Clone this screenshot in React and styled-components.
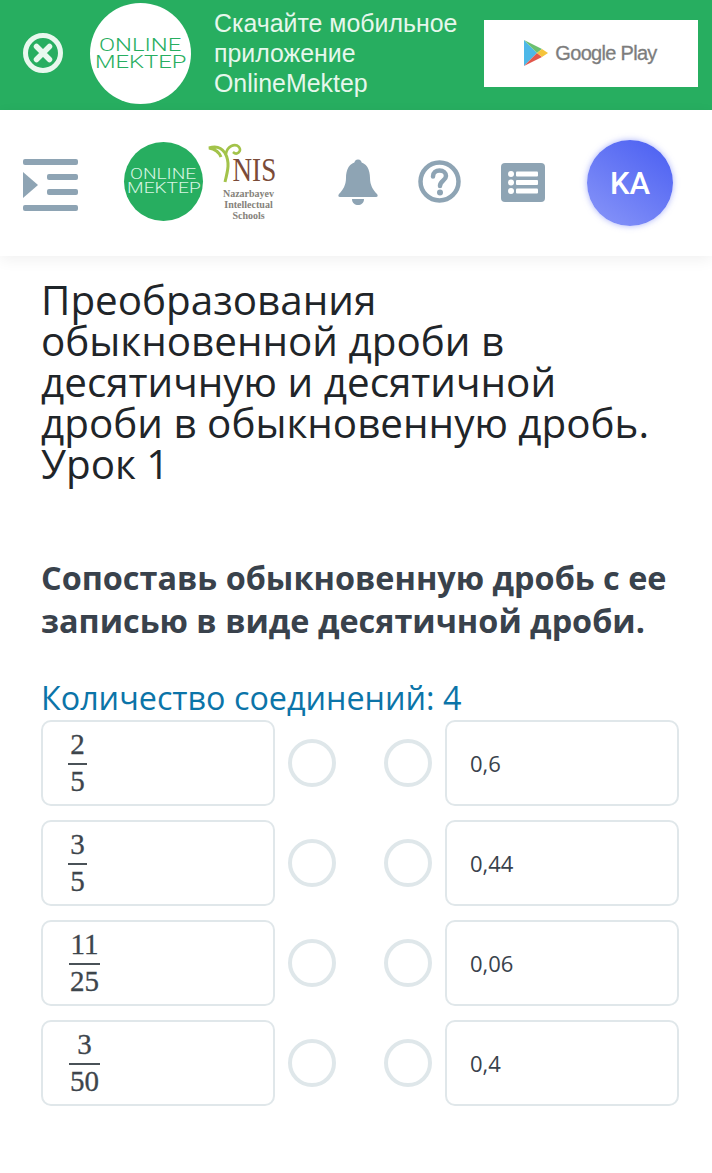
import React from "react";
import styled, { createGlobalStyle } from "styled-components";

const Global = createGlobalStyle`
  html, body { margin: 0; padding: 0; background: #fff; }
  body { font-family: "Open Sans", "Noto Sans", sans-serif; }
  * { box-sizing: border-box; }
`;
const Page = styled.div`width: 712px; height: 1173px; overflow: hidden; background: #fff;`;
const Banner = styled.div`
  height: 110px; background: #27ae60; display: flex; align-items: center; padding-left: 23px;
`;
const CloseIcon = styled.svg`width: 40px; height: 40px; flex: none; margin-top: -5px;`;
const LogoCircle = styled.div`
  flex: none; border-radius: 50%;
  width: ${p => p.$size}px; height: ${p => p.$size}px;
  margin-left: ${p => p.$left}px;
  margin-top: ${p => p.$top}px;
  background: ${p => p.$bg};
  color: ${p => p.$fg};
  display: flex; flex-direction: column; align-items: center; justify-content: center;
  font-family: "Roboto", sans-serif; font-weight: 300;
  font-size: ${p => p.$fs}px; line-height: ${p => p.$fs - 1}px;
`;
const LogoWord = styled.span`display: block; transform: scaleX(1.32);`;
const BannerText = styled.div`
  margin-left: 23px; width: 270px; color: #e6f7ec; font-family: "Liberation Sans", sans-serif;
  font-size: 24.9px; line-height: 30px; margin-top: -5px; flex: none;
`;
const PlayBox = styled.div`
  flex: none; width: 214px; height: 67px; background: #fff; display: flex; align-items: center; justify-content: center;
  gap: 6px; margin-top: -4px; padding-right: 2px;
  color: #7d7d7d; font-family: "Liberation Sans", sans-serif; font-size: 20px; letter-spacing: -0.7px;
  -webkit-text-stroke: 0.3px #7d7d7d;
`;
const Header = styled.header`
  height: 146px; background: #fff; display: flex; align-items: center; padding-left: 23px;
  box-shadow: 0 4px 14px rgba(0, 0, 0, 0.06);
  position: relative;
`;
const HeaderIcon = styled.svg`
  flex: none; width: ${p => p.$w}px; height: ${p => p.$h}px; margin-left: ${p => p.$left || 0}px;
  margin-top: ${p => p.$top || 0}px;
`;
const Nis = styled.div`
  flex: none; width: 68px; margin-left: 5px; padding-left: 13px; display: flex; flex-direction: column; align-items: center;
  font-family: "Liberation Serif", serif; color: #85827a; position: relative;
`;
const NisTop = styled.div`height: 43px; width: 100%;`;
const NisName = styled.span`
  position: absolute; right: 0; top: 9px; font-size: 33px; line-height: 33px; color: #7b4b38; transform: scaleX(.82); transform-origin: right;
`;
const NisSprout = styled.svg`position: absolute; left: 0; top: -5px; width: 36px; height: 46px;`;
const NisLine = styled.span`font-size: 10px; line-height: 11px; font-weight: 700; white-space: nowrap;`;
const Avatar = styled.div`
  flex: none; width: 86px; height: 86px; margin-left: 42px; margin-top: 0; border-radius: 50%;
  background: linear-gradient(215deg, #4f63f2 10%, #8391f8 90%);
  box-shadow: 0 0 6px rgba(100, 115, 245, .55);
  color: #fff; display: flex; align-items: center; justify-content: center;
  font-family: "Roboto", sans-serif; font-weight: 500; font-size: 31px;
`;
const Main = styled.main`padding: 23px 33px 0 41px;`;
const Title = styled.h1`
  margin: 0; font-weight: 400; font-size: 40.4px; line-height: 41px; color: #1f2529; width: 625px;
`;
const Question = styled.h2`
  margin: 72px 0 0; font-weight: 700; font-size: 32.4px; line-height: 43px; color: #39424c; width: 640px;
`;
const Count = styled.div`
  margin-top: 33px; font-size: 32.3px; line-height: 44px; color: #0b74a8; white-space: nowrap;
`;
const Rows = styled.div`display: flex; flex-direction: column; gap: 14px; margin-top: 1px;`;
const Row = styled.div`display: grid; grid-template-columns: 234px 1fr 234px; height: 86px; align-items: center;`;
const Cell = styled.div`
  height: 86px; border: 2px solid #e0e7ea; border-radius: 10px; background: #fff;
  display: flex; align-items: center; padding-left: ${p => p.$pad}px;
  color: #39424c; font-size: 22px;
`;
const Ports = styled.div`display: flex; justify-content: center; gap: 48px;`;
const Port = styled.div`width: 48px; height: 48px; border-radius: 50%; border: 4px solid #dfe7ea; background: #fff;`;
const Frac = styled.div`
  display: inline-flex; flex-direction: column; align-items: center; margin-top: -2px;
  font-family: "Liberation Serif", "DejaVu Serif", serif; font-size: 29px; color: #3d454c; line-height: 36px;
  -webkit-text-stroke: 0.3px #3d454c;
`;
const Num = styled.span`display: block; padding: 0 1px 1px; `;
const Den = styled.span`display: block; line-height: 33px; padding: 0 1px; border-top: 2px solid #4a5258; min-width: 19px; text-align: center;`;

const rows = [
  ["2", "5", "0,6"],
  ["3", "5", "0,44"],
  ["11", "25", "0,06"],
  ["3", "50", "0,4"],
];
const G = "#8ea4b4";

export default function App() {
  return (
    <Page>
      <Global />
      <Banner>
        <CloseIcon viewBox="0 0 40 40">
          <circle cx="20" cy="20" r="17.5" fill="none" stroke="#e8f8ee" strokeWidth="5" />
          <path d="M13.5 13.5 L26.5 26.5 M26.5 13.5 L13.5 26.5" stroke="#e8f8ee" strokeWidth="5.5" strokeLinecap="round" />
        </CloseIcon>
        <LogoCircle $size={101} $left={27} $top={-4} $bg="#fff" $fg="#27ae60" $fs={18}>
          <LogoWord>ONLINE</LogoWord>
          <LogoWord>MEKTEP</LogoWord>
        </LogoCircle>
        <BannerText>Скачайте мобильное приложение OnlineMektep</BannerText>
        <PlayBox>
          <svg width="26" height="28" viewBox="0 0 26 28">
            <path d="M1 1 L14 14 L1 27 Z" fill="#4db8e8" />
            <path d="M1 1 L19 10 L14 14 Z" fill="#6cc070" />
            <path d="M1 27 L19 18 L14 14 Z" fill="#e2574c" />
            <path d="M19 10 L25 14 L19 18 L14 14 Z" fill="#f5c33b" />
          </svg>
          <span>Google Play</span>
        </PlayBox>
      </Banner>
      <Header>
        <HeaderIcon $w={55} $h={52} viewBox="0 0 55 52" $top={4} fill={G}>
          <rect x="0" y="0" width="55" height="6" rx="2" />
          <rect x="24" y="15" width="31" height="6" rx="2" />
          <rect x="24" y="30" width="31" height="6" rx="2" />
          <rect x="0" y="46" width="55" height="6" rx="2" />
          <path d="M0 13 L15 26 L0 39 Z" />
        </HeaderIcon>
        <LogoCircle $size={79} $left={46} $top={-3} $bg="#27ae60" $fg="#d6f5e2" $fs={14.5}>
          <LogoWord>ONLINE</LogoWord>
          <LogoWord>MEKTEP</LogoWord>
        </LogoCircle>
        <Nis>
          <NisTop />
          <NisSprout viewBox="0 0 36 46">
            <path d="M17 42 C20 30 22 22 17 13 C13 7 7 6 1 8 C7 9 11 12 13 17" fill="none" stroke="#a3c34a" strokeWidth="3" />
            <path d="M18 14 C19 6 27 3 31 7 C34 11 29 16 25 12" fill="none" stroke="#a3c34a" strokeWidth="2.5" />
          </NisSprout>
          <NisName>NIS</NisName>
          <NisLine>Nazarbayev</NisLine>
          <NisLine>Intellectual</NisLine>
          <NisLine>Schools</NisLine>
        </Nis>
        <HeaderIcon $w={40} $h={46} $left={62} $top={-3} viewBox="0 0 40 46" fill={G}>
          <circle cx="20" cy="4" r="3.5" />
          <path d="M20 3 C29 3 32 11 32 19 C32 26 35 31 39 35 C40 36 40 38 38 38 L2 38 C0 38 0 36 1 35 C5 31 8 26 8 19 C8 11 11 3 20 3 Z" />
          <path d="M14 40 L26 40 C26 44 23 46 20 46 C17 46 14 44 14 40 Z" />
        </HeaderIcon>
        <HeaderIcon $w={43} $h={43} $left={40} $top={-3} viewBox="0 0 43 43">
          <circle cx="21.5" cy="21.5" r="19" fill="none" stroke={G} strokeWidth="4.5" />
          <path d="M15 16.5 C15 12.5 18 10.5 21.5 10.5 C25.5 10.5 28 13 28 16 C28 20.5 22 20.5 22 26" fill="none" stroke={G} strokeWidth="4.5" strokeLinecap="round" />
          <circle cx="22" cy="32.5" r="3" fill={G} />
        </HeaderIcon>
        <HeaderIcon $w={44} $h={39} $left={40} $top={-1} viewBox="0 0 44 39">
          <rect width="44" height="39" rx="4" fill={G} />
          <circle cx="10" cy="11" r="3" fill="#fff" />
          <circle cx="10" cy="19.5" r="3" fill="#fff" />
          <circle cx="10" cy="28" r="3" fill="#fff" />
          <rect x="15" y="8.5" width="22" height="5" rx="1" fill="#fff" />
          <rect x="15" y="17" width="22" height="5" rx="1" fill="#fff" />
          <rect x="15" y="25.5" width="22" height="5" rx="1" fill="#fff" />
        </HeaderIcon>
        <Avatar>KA</Avatar>
      </Header>
      <Main>
        <Title>Преобразования обыкновенной дроби в десятичную и десятичной дроби в обыкновенную дробь. Урок 1</Title>
        <Question>Сопоставь обыкновенную дробь с ее записью в виде десятичной дроби.</Question>
        <Count>Количество соединений: 4</Count>
        <Rows>
          {rows.map(([n, d, v]) => (
            <Row key={n + d}>
              <Cell $pad={d.length > 1 ? 26 : 25}>
                <Frac><Num>{n}</Num><Den>{d}</Den></Frac>
              </Cell>
              <Ports><Port /><Port /></Ports>
              <Cell $pad={23}>{v}</Cell>
            </Row>
          ))}
        </Rows>
      </Main>
    </Page>
  );
}
